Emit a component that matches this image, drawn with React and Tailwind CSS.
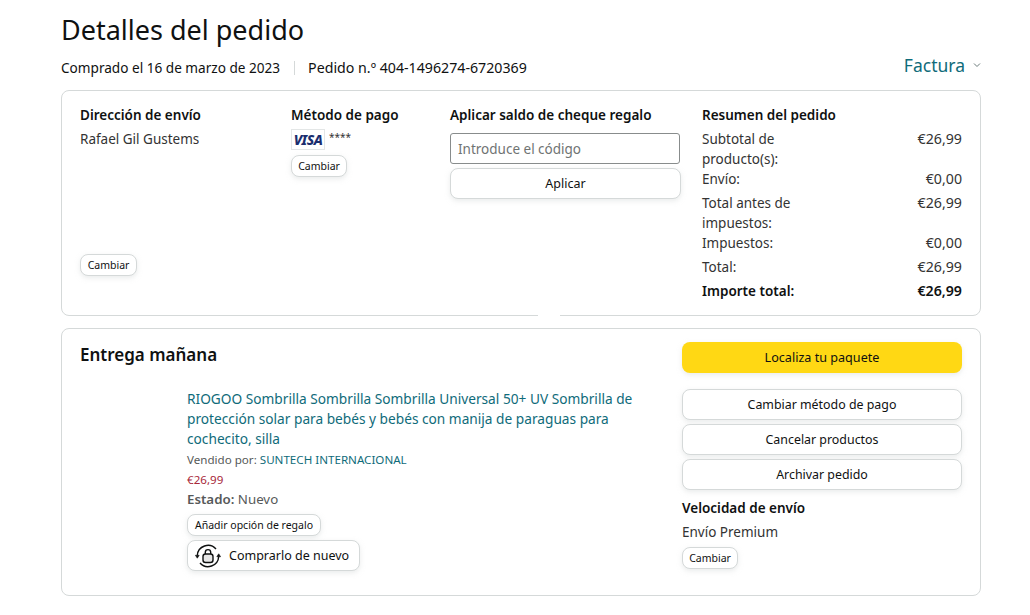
const PillButton = ({ children, className = '' }) => (
  <button className={`flex items-center justify-center border border-[#d5d9d9] bg-white pt-[1px] text-[#0f1111] shadow-[0_2px_5px_rgba(213,217,217,0.5)] ${className}`}>
    {children}
  </button>
)

const SummaryRow = ({ label, value, bold, className = '' }) => (
  <div className={`flex justify-between text-[13.5px] leading-[20px] ${bold ? 'font-semibold text-[#0f1111]' : 'text-[#333]'} ${className}`}>
    <span className="w-[120px]">{label}</span>
    <span className="text-[14.2px]">{value}</span>
  </div>
)

const BuyAgainIcon = () => (
  <svg width="26" height="26" viewBox="0 0 26 26" fill="none" stroke="#0f1111" strokeWidth="1.4">
    <path d="M2.3 12.5A10.7 10.7 0 0 1 21 6" />
    <path d="M23.7 13.5A10.7 10.7 0 0 1 5 20" />
    <path d="M0.4 12.3h3.8l-1.9 2.9z" fill="#0f1111" strokeWidth="0.6" />
    <path d="M25.6 13.7h-3.8l1.9-2.9z" fill="#0f1111" strokeWidth="0.6" />
    <rect x="8" y="11" width="10" height="8.5" rx="2.5" fill="#0f1111" fillOpacity="0.1" />
    <path d="M10.3 11V9.3a2.7 2.7 0 0 1 5.4 0V11" />
  </svg>
)

export default function App() {
  return (
    <div className="min-h-[615px] bg-white pl-[61px] pr-[49px] font-['Noto_Sans',sans-serif] text-[#0f1111]">
      {/* Header */}
      <h1 className="pt-[11px] text-[27px] leading-[38px]">Detalles del pedido</h1>
      <div className="mt-[4px] flex h-[37px] items-start justify-between">
        <div className="flex items-center pt-[5px] leading-[20px]">
          <span className="text-[13.6px]">Comprado el 16 de marzo de 2023</span>
          <span className="ml-[14px] mr-[13px] h-[14px] w-px bg-[#d5d9d9]" />
          <span className="text-[14.2px]">Pedido n.º 404-1496274-6720369</span>
        </div>
        <div className="flex items-center text-[#0f6b7a]">
          <span className="text-[17.5px] leading-[24px]">Factura</span>
          <svg className="ml-[8px]" width="8" height="6" viewBox="0 0 8 6" fill="none" stroke="#6b7b7b" strokeWidth="1">
            <path d="M1 1.5l3 3 3-3" />
          </svg>
        </div>
      </div>

      {/* Order info card */}
      <div className="relative flex h-[226px] rounded-[8px] border border-[#d5d9d9] pl-[18px] pr-[18px] pt-[14px]">
        <div className="flex w-[211px] flex-col">
          <h3 className="text-[13.5px] font-semibold leading-[20px]">Dirección de envío</h3>
          <p className="mt-[4px] text-[13.5px] leading-[20px] text-[#333]">Rafael Gil Gustems</p>
          <PillButton className="mt-[105px] h-[22px] w-[57px] rounded-[8px] text-[10.5px]">Cambiar</PillButton>
        </div>
        <div className="w-[159px]">
          <h3 className="text-[13.5px] font-semibold leading-[20px]">Método de pago</h3>
          <div className="mt-[4px] flex items-start">
            <div className="flex h-[21px] w-[34px] items-center justify-center border border-[#e3e6e6] text-[14px] font-extrabold italic leading-none tracking-[-0.5px] text-[#1a2e6e]">VISA</div>
            <span className="ml-[4px] text-[10px] leading-[16px] text-[#333]">****</span>
          </div>
          <PillButton className="mt-[5px] h-[22px] w-[56px] rounded-[8px] text-[10.5px]">Cambiar</PillButton>
        </div>
        <div className="w-[252px]">
          <h3 className="text-[13.5px] font-semibold leading-[20px]">Aplicar saldo de cheque regalo</h3>
          <div className="mt-[8px] flex h-[31px] w-[230px] items-center rounded-[3px] border border-[#888c8c] pl-[7px] pt-[1px] text-[13.5px] text-[#6f7373]">Introduce el código</div>
          <PillButton className="mt-[4px] h-[31px] w-[231px] rounded-[8px] text-[12.5px]">Aplicar</PillButton>
        </div>
        <div className="w-[260px]">
          <h3 className="text-[13.5px] font-semibold leading-[20px]">Resumen del pedido</h3>
          <SummaryRow className="mt-[4px]" label="Subtotal de producto(s):" value="€26,99" />
          <SummaryRow label="Envío:" value="€0,00" />
          <SummaryRow className="mt-[4px]" label="Total antes de impuestos:" value="€26,99" />
          <SummaryRow label="Impuestos:" value="€0,00" />
          <SummaryRow className="mt-[4px]" label="Total:" value="€26,99" />
          <SummaryRow className="mt-[4px]" bold label="Importe total:" value="€26,99" />
        </div>
        <div className="absolute left-[476px] top-[223px] z-10 h-[14px] w-[22px] bg-white" />
      </div>

      {/* Shipment card */}
      <div className="mt-[12px] flex h-[268px] rounded-[8px] border border-[#d5d9d9] pl-[18px] pr-[18px] pt-[13px]">
        <div className="w-[602px]">
          <h2 className="mt-[1px] text-[17px] font-semibold leading-[24px]">Entrega mañana</h2>
          <div className="pl-[107px] pt-[22px]">
            <p className="w-[460px] text-[13.7px] leading-[20px] text-[#0f6b7a]">
              RIOGOO Sombrilla Sombrilla Sombrilla Universal 50+ UV Sombrilla de protección solar para bebés y bebés con manija de paraguas para cochecito, silla
            </p>
            <p className="mt-[2px] text-[11.6px] leading-[18px] text-[#565959]">
              Vendido por: <span className="text-[#0f6b7a]">SUNTECH INTERNACIONAL</span>
            </p>
            <p className="mt-[2px] text-[11.6px] leading-[18px] text-[#a8283a]">€26,99</p>
            <p className="text-[13.3px] leading-[20px] text-[#565959]">
              <span className="font-semibold">Estado:</span> Nuevo
            </p>
            <PillButton className="mt-[5px] h-[22px] w-[134px] rounded-[8px] text-[10.5px]">Añadir opción de regalo</PillButton>
            <PillButton className="mt-[4px] h-[31px] w-[173px] justify-start gap-[8px] rounded-[8px] pl-[7px] text-[12.5px]">
              <BuyAgainIcon />
              Comprarlo de nuevo
            </PillButton>
          </div>
        </div>
        <div className="w-[280px]">
          <button className="flex h-[31px] w-[280px] items-center justify-center rounded-[8px] bg-[#ffd814] pt-[1px] text-[12.6px] shadow-[0_2px_5px_rgba(213,217,217,0.5)]">Localiza tu paquete</button>
          <PillButton className="mt-[16px] h-[31px] w-[280px] rounded-[8px] text-[12.4px]">Cambiar método de pago</PillButton>
          <PillButton className="mt-[4px] h-[31px] w-[280px] rounded-[8px] text-[12.4px]">Cancelar productos</PillButton>
          <PillButton className="mt-[4px] h-[31px] w-[280px] rounded-[8px] text-[12.4px]">Archivar pedido</PillButton>
          <h3 className="mt-[8px] text-[13.5px] font-semibold leading-[20px]">Velocidad de envío</h3>
          <p className="mt-[4px] text-[13.5px] leading-[20px] text-[#333]">Envío Premium</p>
          <PillButton className="mt-[5px] h-[22px] w-[56px] rounded-[8px] text-[10.5px]">Cambiar</PillButton>
        </div>
      </div>
    </div>
  )
}
